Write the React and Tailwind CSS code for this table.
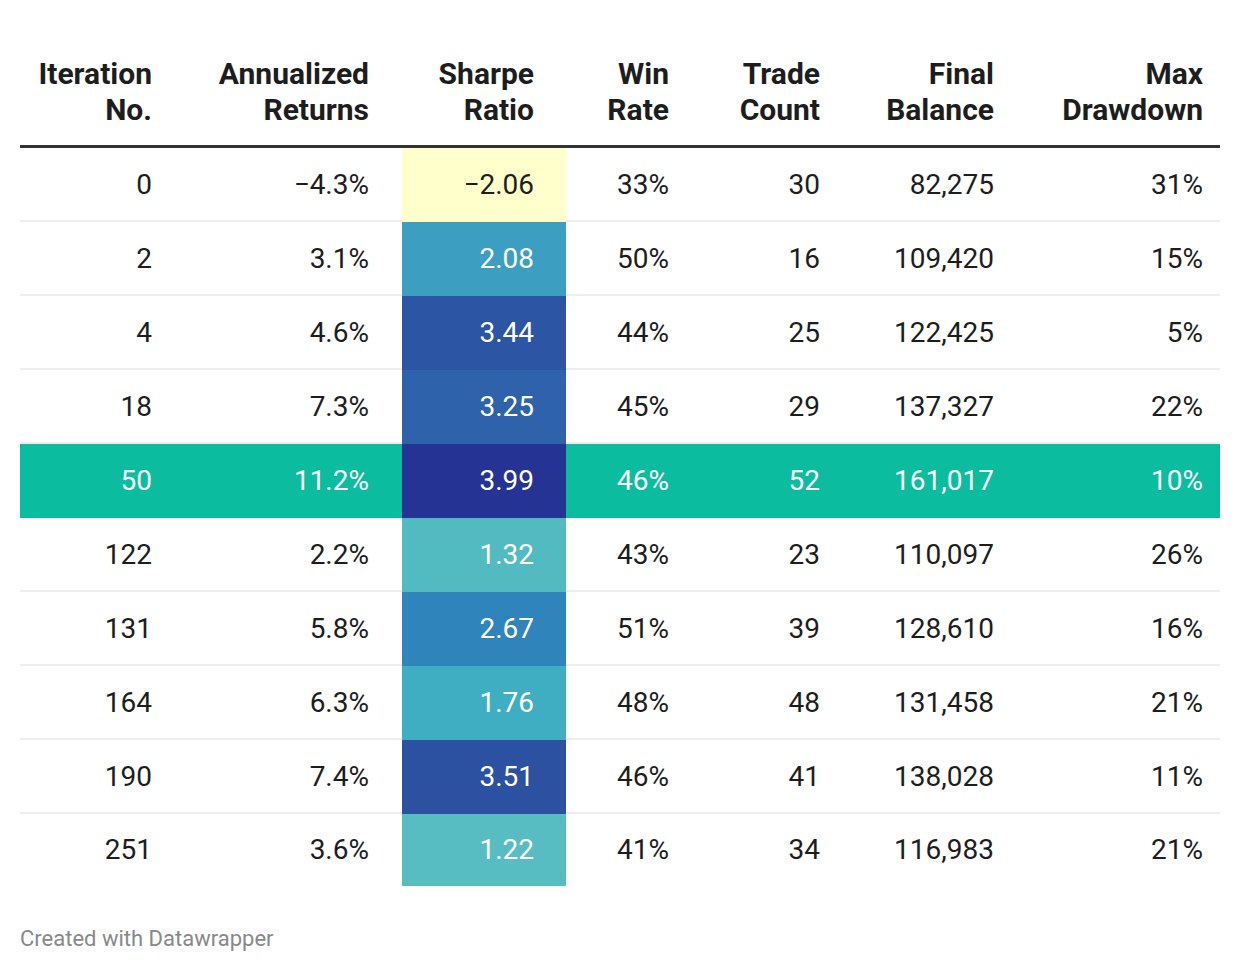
import React from "react";

const columns = [
  { key: "iter", label: ["Iteration", "No."] },
  { key: "ret", label: ["Annualized", "Returns"] },
  { key: "sharpe", label: ["Sharpe", "Ratio"] },
  { key: "win", label: ["Win", "Rate"] },
  { key: "trades", label: ["Trade", "Count"] },
  { key: "balance", label: ["Final", "Balance"] },
  { key: "dd", label: ["Max", "Drawdown"] },
];

// sharpe cell colours sampled from the heatmap
const rows = [
  { iter: "0", ret: "−4.3%", sharpe: "−2.06", bg: "bg-[#ffffcc]", dark: false, win: "33%", trades: "30", balance: "82,275", dd: "31%" },
  { iter: "2", ret: "3.1%", sharpe: "2.08", bg: "bg-[#3c9ec0]", dark: true, win: "50%", trades: "16", balance: "109,420", dd: "15%" },
  { iter: "4", ret: "4.6%", sharpe: "3.44", bg: "bg-[#2c55a4]", dark: true, win: "44%", trades: "25", balance: "122,425", dd: "5%" },
  { iter: "18", ret: "7.3%", sharpe: "3.25", bg: "bg-[#2e62aa]", dark: true, win: "45%", trades: "29", balance: "137,327", dd: "22%" },
  { iter: "50", ret: "11.2%", sharpe: "3.99", bg: "bg-[#253494]", dark: true, win: "46%", trades: "52", balance: "161,017", dd: "10%", highlight: true },
  { iter: "122", ret: "2.2%", sharpe: "1.32", bg: "bg-[#52bbc1]", dark: true, win: "43%", trades: "23", balance: "110,097", dd: "26%" },
  { iter: "131", ret: "5.8%", sharpe: "2.67", bg: "bg-[#2f84bb]", dark: true, win: "51%", trades: "39", balance: "128,610", dd: "16%" },
  { iter: "164", ret: "6.3%", sharpe: "1.76", bg: "bg-[#40aec2]", dark: true, win: "48%", trades: "48", balance: "131,458", dd: "21%" },
  { iter: "190", ret: "7.4%", sharpe: "3.51", bg: "bg-[#2c51a0]", dark: true, win: "46%", trades: "41", balance: "138,028", dd: "11%" },
  { iter: "251", ret: "3.6%", sharpe: "1.22", bg: "bg-[#57bdc3]", dark: true, win: "41%", trades: "34", balance: "116,983", dd: "21%" },
];

const grid = "grid grid-cols-[148px_234px_164px_120px_151px_174px_209px]";
const pad = ["pr-[16px]", "pr-[33px]", "pr-[32px]", "pr-[17px]", "pr-[17px]", "pr-[17px]", "pr-[17px]"];

export default function App() {
  return (
    <div
      className="w-[1240px] h-[972px] bg-white px-5 pt-[56px] text-[#1d1d1d]"
      style={{ fontFamily: "Roboto, 'Liberation Sans', sans-serif" }}
    >
      {/* Header */}
      <div className={`${grid} border-b-[3px] border-[#333333] pb-[17px]`}>
        {columns.map((c, i) => (
          <div key={c.key} className={`text-right font-bold text-[30px] leading-[36px] ${pad[i]}`}>
            <div>{c.label[0]}</div>
            <div>{c.label[1]}</div>
          </div>
        ))}
      </div>

      {/* Body */}
      <div className="flex flex-col">
        {rows.map((r, idx) => {
          const last = idx === rows.length - 1;
          const line = r.highlight || last ? "" : "shadow-[inset_0_-2px_0_#eeeeee]";
          return (
            <div
              key={r.iter}
              className={`${grid} text-[28px] ${last ? "h-[72px]" : "h-[74px]"} ${
                r.highlight ? "bg-[#0bbc9f] text-white" : ""
              }`}
            >
              {columns.map((c, i) => {
                if (c.key === "sharpe") {
                  return (
                    <div
                      key={c.key}
                      className={`flex items-center justify-end ${pad[i]} ${r.bg} ${
                        r.dark ? "text-white" : "text-[#1d1d1d]"
                      }`}
                    >
                      {r.sharpe}
                    </div>
                  );
                }
                return (
                  <div key={c.key} className={`flex items-center justify-end ${pad[i]} ${line}`}>
                    {r[c.key]}
                  </div>
                );
              })}
            </div>
          );
        })}
      </div>

      <p className="mt-[39px] text-[22px] leading-[28px] text-[#888888]">Created with Datawrapper</p>
    </div>
  );
}
